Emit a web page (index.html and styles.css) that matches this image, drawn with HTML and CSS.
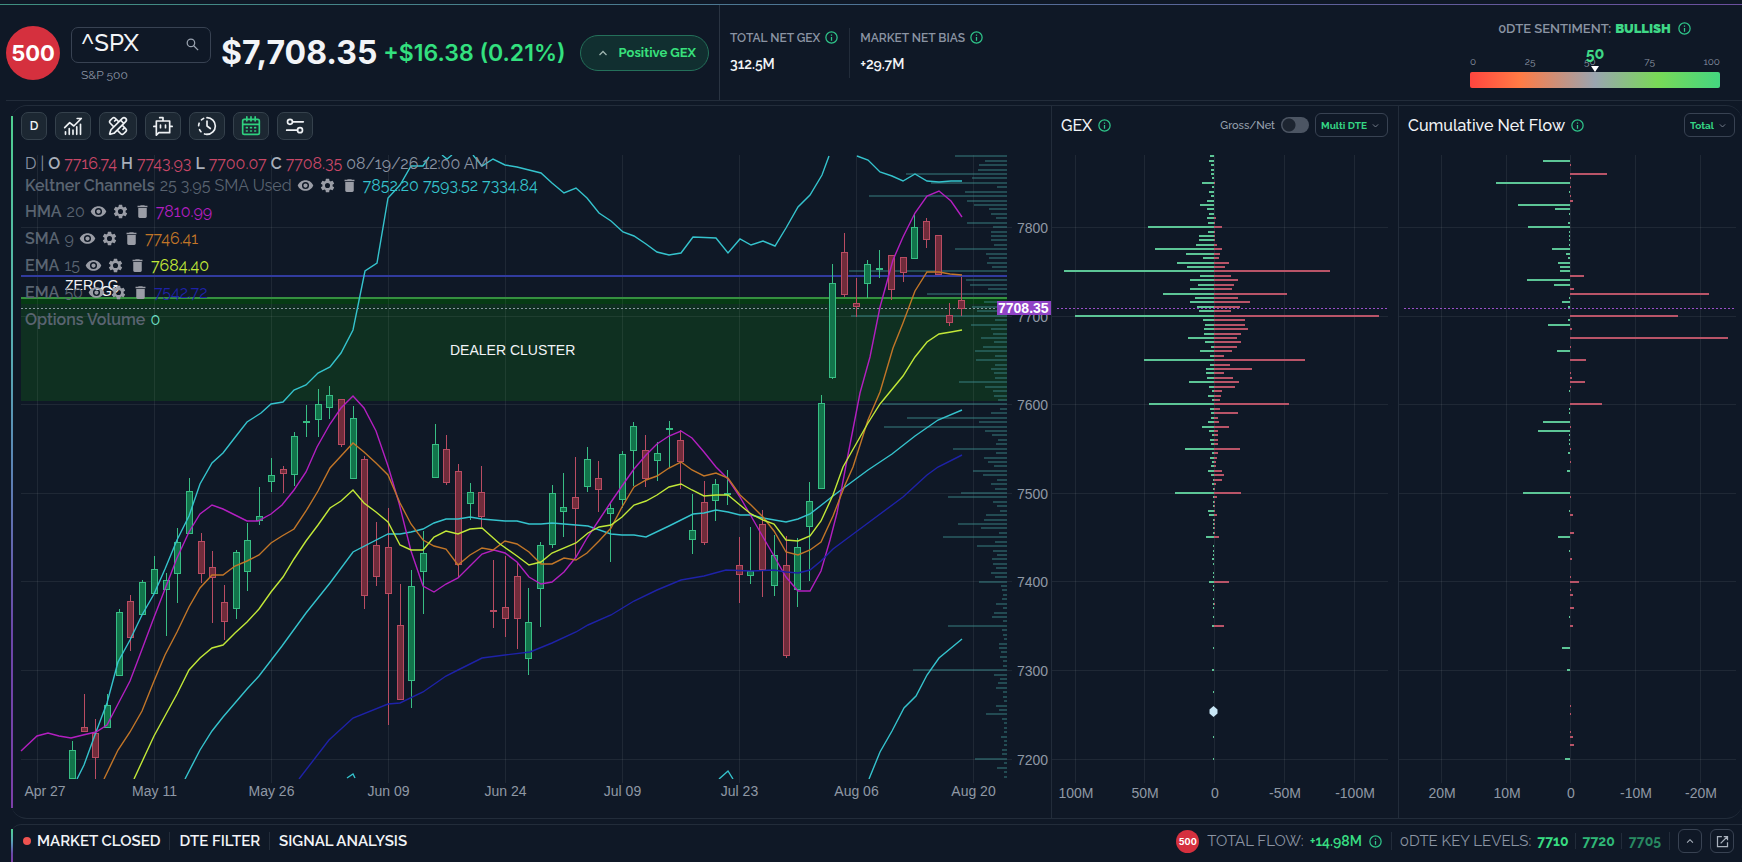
FILE: index.html
```html
<!DOCTYPE html>
<html lang="en">
<head>
    <meta charset="UTF-8">
    <meta name="viewport" content="width=device-width, initial-scale=1.0">
    <title>^SPX - GEX Dashboard</title>
    <link rel="stylesheet" href="styles.css">
</head>
<body>
    <!-- Shared icons -->
    <svg class="sprite" aria-hidden="true">
        <symbol id="i-info" viewBox="0 0 24 24"><path fill="currentColor" d="M11 7h2v2h-2zm0 4h2v6h-2zm1-9a10 10 0 1 0 0 20 10 10 0 0 0 0-20zm0 18a8 8 0 1 1 0-16 8 8 0 0 1 0 16z"/></symbol>
        <symbol id="i-eye" viewBox="0 0 24 24"><path fill="currentColor" d="M12 4.5C7 4.500 2.730 7.610 1 12c1.730 4.390 6 7.500 11 7.500s9.270-3.110 11-7.500c-1.730-4.390-6-7.500-11-7.500zM12 17a5 5 0 1 1 0-10 5 5 0 0 1 0 10zm0-8a3 3 0 1 0 0 6 3 3 0 0 0 0-6z"/></symbol>
        <symbol id="i-gear" viewBox="0 0 24 24"><path fill="currentColor" d="M19.140 12.940c.04-.3.060-.61.060-.94s-.02-.64-.07-.94l2.030-1.580a.5.5 0 0 0 .12-.61l-1.920-3.320a.49.49 0 0 0-.59-.22l-2.390.96a7 7 0 0 0-1.620-.94l-.36-2.540A.48.48 0 0 0 13.920 2.400h-3.840a.47.47 0 0 0-.47.410l-.36 2.540c-.59.240-1.130.570-1.620.940l-2.390-.96a.48.48 0 0 0-.59.220L2.740 8.870a.47.47 0 0 0 .12.610l2.030 1.580a6 6 0 0 0 0 1.880l-2.030 1.580a.5.5 0 0 0-.12.610l1.920 3.320c.12.220.370.290.590.220l2.390-.96c.5.380 1.030.7 1.620.940l.36 2.540c.05.240.240.410.480.410h3.840c.24 0 .44-.17.470-.41l.36-2.540a7 7 0 0 0 1.620-.94l2.390.96c.22.080.470 0 .59-.22l1.920-3.320a.47.47 0 0 0-.12-.61zM12 15.600a3.600 3.600 0 1 1 0-7.200 3.600 3.600 0 0 1 0 7.200z"/></symbol>
        <symbol id="i-trash" viewBox="0 0 24 24"><path fill="currentColor" d="M6 19c0 1.100.9 2 2 2h8c1.100 0 2-.9 2-2V7H6zM19 4h-3.500l-1-1h-5l-1 1H5v2h14z"/></symbol>
        <symbol id="i-down" viewBox="0 0 24 24"><path fill="none" stroke="currentColor" stroke-width="2.500" d="M5 9l7 7 7-7"/></symbol>
        <symbol id="i-up" viewBox="0 0 24 24"><path fill="none" stroke="currentColor" stroke-width="2.500" d="M5 16l7-7 7 7"/></symbol>
    </svg>

    <header class="topbar">
        <div class="quote">
            <span class="logo">500</span>
            <div class="symbol">
                <div class="symbol-box">
                    <input type="text" id="symbol" value="^SPX" aria-label="Symbol">
                    <svg class="search" viewBox="0 0 24 24"><path fill="none" stroke="currentColor" stroke-width="2" d="M9.500 3.500a6 6 0 1 0 0 12 6 6 0 0 0 0-12zM14 14l7 7"/></svg>
                </div>
                <label for="symbol">S&amp;P 500</label>
            </div>
            <span class="price">$7,708.35</span>
            <span class="change">+$16.38 (0.21%)</span>
            <button class="pill"><svg><use href="#i-up"/></svg>Positive GEX</button>
        </div>
        <div class="stats">
            <div class="stat">
                <div class="stat-name">TOTAL NET GEX <svg class="info"><use href="#i-info"/></svg></div>
                <div class="stat-value">312.5M</div>
            </div>
            <div class="stat">
                <div class="stat-name">MARKET NET BIAS <svg class="info"><use href="#i-info"/></svg></div>
                <div class="stat-value">+29.7M</div>
            </div>
        </div>
        <div class="sentiment">
            <div class="sentiment-name">0DTE SENTIMENT: <b>BULLISH</b> <svg class="info"><use href="#i-info"/></svg></div>
            <div class="gauge">
                <div class="ticks"><span>0</span><span>25</span><span>50</span><span>75</span><span>100</span></div>
                <div class="gauge-bar"></div>
                <div class="marker">50</div>
            </div>
        </div>
    </header>

    <main class="panel">
        <section class="col">
            <div class="col-head toolbar">
                <button class="tool small">D</button>
                <button class="tool" aria-label="Indicators"><svg viewBox="0 0 24 24"><path d="M2 14l6-6 5 4 9-9M17 3h5M3 22v-3M7.500 22v-7M12 22v-5M16.500 22v-9M21 22V10"/></svg></button>
                <button class="tool wide" aria-label="Drawing tools"><svg viewBox="0 0 24 24"><path d="M13 7L8.700 2.700a2.410 2.410 0 0 0-3.400 0L2.700 5.300a2.410 2.410 0 0 0 0 3.400L7 13M8 6l2-2M18 16l2-2M17 11l4.300 4.300a2.410 2.410 0 0 1 0 3.400l-2.600 2.600a2.410 2.410 0 0 1-3.400 0L11 17M21.170 6.810a1 1 0 0 0-3.980-3.990L3.840 16.170a2 2 0 0 0-.5.830l-1.320 4.350a.5.5 0 0 0 .62.620l4.350-1.320a2 2 0 0 0 .83-.5zM15 5l4 4"/></svg></button>
                <button class="tool" aria-label="Assistant"><svg viewBox="0 0 24 24"><path d="M12 6V2H8M4 6h16v14H7l-3 3zM1 12.500h3M20 12.500h3M9 11v3M15 11v3"/></svg></button>
                <button class="tool" aria-label="Replay"><svg viewBox="0 0 24 24"><path d="M12 2a10 10 0 0 1 0 20M12 6v6l4 3"/><path stroke-dasharray="3 5" d="M12 22a10 10 0 0 1 0-20"/></svg></button>
                <button class="tool on" aria-label="Calendar"><svg viewBox="0 0 24 24"><path d="M4 4h16a2 2 0 0 1 2 2v14a2 2 0 0 1-2 2H4a2 2 0 0 1-2-2V6c0-1 1-2 2-2zM2 10h20M7 1v5M12 1v5M17 1v5M6.500 14h1M11.500 14h1M16.500 14h1M6.500 18h1M11.500 18h1M16.500 18h1"/></svg></button>
                <button class="tool" aria-label="Settings"><svg viewBox="0 0 24 24"><circle cx="6" cy="7" r="3"/><circle cx="18" cy="17" r="3"/><path d="M9 7h13M15 17H2"/></svg></button>
            </div>
            <div class="chart-wrap">
                <svg class="chart" id="priceChart" viewBox="13 146 1038 672"></svg>
                <div class="legend">
                    <p class="ohlc">D | <b>O</b> <i>7716.74</i> <b>H</b> <i>7743.93</i> <b>L</b> <i>7700.07</i> <b>C</b> <i>7708.35</i> 08/19/26 12:00 AM</p>
                    <p><b>Keltner Channels</b> 25 3.95 SMA Used <svg><use href="#i-eye"/></svg><svg><use href="#i-gear"/></svg><svg><use href="#i-trash"/></svg><span class="cyan">7852.20 7593.52 7334.84</span></p>
                    <p><b>HMA</b> 20 <svg><use href="#i-eye"/></svg><svg><use href="#i-gear"/></svg><svg><use href="#i-trash"/></svg><span class="magenta">7810.99</span></p>
                    <p><b>SMA</b> 9 <svg><use href="#i-eye"/></svg><svg><use href="#i-gear"/></svg><svg><use href="#i-trash"/></svg><span class="orange">7746.41</span></p>
                    <p><b>EMA</b> 15 <svg><use href="#i-eye"/></svg><svg><use href="#i-gear"/></svg><svg><use href="#i-trash"/></svg><span class="yellow">7684.40</span></p>
                    <p><b>EMA</b> 50 <svg><use href="#i-eye"/></svg><svg><use href="#i-gear"/></svg><svg><use href="#i-trash"/></svg><span class="blue">7542.72</span></p>
                    <p><b>Options Volume</b> <span class="teal">0</span></p>
                </div>
            </div>
        </section>

        <section class="col">
            <div class="col-head">
                <h2>GEX</h2>
                <svg class="info"><use href="#i-info"/></svg>
                <label class="switch">Gross/Net <input type="checkbox"></label>
                <div class="select">
                    <select aria-label="Expiration"><option>Multi DTE</option></select>
                    <svg><use href="#i-down"/></svg>
                </div>
            </div>
            <svg class="chart" id="gexChart" viewBox="1052 146 346 672"></svg>
        </section>

        <section class="col">
            <div class="col-head">
                <h2>Cumulative Net Flow</h2>
                <svg class="info"><use href="#i-info"/></svg>
                <div class="select end">
                    <select aria-label="Flow type"><option>Total</option></select>
                    <svg><use href="#i-down"/></svg>
                </div>
            </div>
            <svg class="chart" id="flowChart" viewBox="1399 146 343 672"></svg>
        </section>
    </main>

    <footer class="bottombar">
        <nav>
            <a href="#" class="status">MARKET CLOSED</a>
            <a href="#">DTE FILTER</a>
            <a href="#">SIGNAL ANALYSIS</a>
        </nav>
        <div class="flow">
            <span class="logo mini">500</span>
            <span>TOTAL FLOW:</span>
            <b>+14.98M</b>
            <svg class="info"><use href="#i-info"/></svg>
        </div>
        <div class="levels">
            <span>0DTE KEY LEVELS:</span>
            <b>7710</b><b class="mid">7720</b><b class="low">7705</b>
        </div>
        <div class="actions">
            <button aria-label="Expand"><svg><use href="#i-up"/></svg></button>
            <button aria-label="Open in new window"><svg viewBox="0 0 24 24"><path fill="none" stroke="currentColor" stroke-width="2" d="M11 4H4v16h16v-7M14 4h6v6M20 4L9 15"/></svg></button>
        </div>
    </footer>

    <script src="charts.js"></script>
</body>
</html>
```

FILE: styles.css
```css
* {
    box-sizing: border-box;
}
body {
    margin: 0;
    min-height: 100vh;
    display: flex;
    flex-direction: column;
    background-color: #0f1826;
    color: #f2f4f7;
    font-family: Raleway, Lato, "Open Sans", sans-serif;
    font-size: 14px;
}
button, input, select {
    font-family: inherit;
    color: inherit;
}
button {
    padding: 0;
    cursor: pointer;
}
.sprite {
    position: absolute;
    width: 0;
    height: 0;
}
.info {
    width: 15px;
    height: 15px;
    color: #2fc58a;
    flex: none;
}

/* Top bar */
.topbar {
    height: 101px;
    margin-left: 6px;
    padding-top: 5px;
    display: flex;
    border-bottom: 1px solid #222c3a;
    position: relative;
}
.topbar::before {
    content: "";
    position: absolute;
    top: 4px;
    left: -6px;
    right: 0;
    height: 1px;
    background: linear-gradient(90deg, #3f8f80, #4f7396 50%, #6b4f9e);
}
.quote {
    display: flex;
    align-items: center;
    border-right: 1px solid #2a3442;
    padding-right: 10px;
}
.logo {
    width: 54px;
    height: 54px;
    border-radius: 50%;
    background-color: #d5303e;
    color: #fff;
    font-family: Inter, sans-serif;
    font-weight: 700;
    font-size: 22px;
    display: flex;
    align-items: center;
    justify-content: center;
    flex: none;
}
.symbol {
    width: 140px;
    margin-left: 11px;
    padding-top: 4px;
}
.symbol-box {
    height: 36px;
    display: flex;
    align-items: center;
    border: 1px solid #384252;
    border-radius: 7px;
    padding: 0 10px 0 9px;
}
.symbol-box input {
    flex: 1;
    min-width: 0;
    border: none;
    padding: 0 0 4px;
    background: none;
    font-size: 24px;
    font-weight: 500;
    outline: none;
}
.search {
    width: 15px;
    height: 15px;
    color: #9aa3b0;
}
.symbol label {
    display: block;
    margin: 4px 0 0 10px;
    font-size: 12px;
    line-height: 16px;
    color: #8b94a3;
}
.price {
    margin-left: 10px;
    font-family: Inter, sans-serif;
    font-weight: 700;
    font-size: 32px;
}
.change {
    margin-left: 6px;
    font-family: Inter, sans-serif;
    font-weight: 600;
    font-size: 23px;
    color: #33e07f;
}
.pill {
    margin-left: 14px;
    height: 36px;
    padding: 0 12px 0 16px;
    display: flex;
    align-items: center;
    gap: 10px;
    border: 1px solid #24705a;
    border-radius: 18px;
    background-color: #112f30;
    color: #38e07c;
    font-size: 13px;
    font-weight: 700;
}
.pill svg {
    width: 12px;
    height: 12px;
    color: #9fb5b0;
}
.stats {
    display: flex;
    align-items: center;
    padding-left: 10px;
}
.stat {
    height: 50px;
    padding: 2px 10px 0 0;
}
.stat + .stat {
    border-left: 1px solid #222c3a;
    padding-left: 10px;
}
.stat-name {
    display: flex;
    align-items: center;
    gap: 4px;
    height: 16px;
    font-size: 12px;
    font-weight: 600;
    color: #8b94a3;
}
.stat-value {
    margin-top: 9px;
    font-size: 14px;
    line-height: 18px;
    font-weight: 600;
}
.sentiment {
    width: 250px;
    margin: 14px 22px 0 auto;
}
.sentiment-name {
    display: flex;
    align-items: center;
    justify-content: center;
    gap: 4px;
    height: 18px;
    font-size: 13px;
    font-weight: 600;
    color: #8b94a3;
}
.sentiment-name b {
    color: #3fd887;
}
.sentiment-name .info {
    margin-left: 2px;
}
.gauge {
    position: relative;
    margin-top: 19px;
}
.ticks {
    display: flex;
    justify-content: space-between;
    font-size: 10px;
    line-height: 12px;
    color: #8b94a3;
}
.gauge-bar {
    height: 16px;
    margin-top: 4px;
    border-radius: 2px;
    background: linear-gradient(90deg, #ff453f, #ff7b45 20%, #9aa5b0 50%, #79d957 75%, #44d680);
}
.marker {
    position: absolute;
    top: -14px;
    left: 0;
    right: 0;
    text-align: center;
    font-size: 16px;
    line-height: 24px;
    font-weight: 700;
    color: #3fd887;
}
.marker::after {
    content: "";
    display: block;
    width: 0;
    margin: 0 auto;
    border: 4px solid transparent;
    border-top: 6px solid #fff;
    border-bottom: none;
}

/* Main panel */
.panel {
    position: relative;
    margin: 4px 0 0 11px;
    padding-left: 2px;
    display: grid;
    grid-template-columns: 1038fr 347fr 344fr;
    border-top: 1px solid #222c3a;
    border-bottom: 1px solid #222c3a;
    border-radius: 16px;
}
.panel::before,
.bottombar::before {
    content: "";
    position: absolute;
    left: 0;
    top: 10px;
    bottom: 10px;
    width: 2px;
    background: linear-gradient(#4fcf90, #58a9b4 35%, #5b86b5 50%, #6b46a8 75%, #7c3fa8);
}
.col + .col {
    border-left: 1px solid #222c3a;
}
.col-head {
    height: 40px;
    padding: 0 10px 2px 9px;
    display: flex;
    align-items: center;
}
.col:last-child .col-head {
    padding-right: 7px;
}
.col-head h2 {
    margin: 0 5px 0 0;
    font-size: 16px;
    font-weight: 500;
}
.toolbar {
    gap: 8px;
    padding: 0 0 0 8px;
}
.tool {
    width: 36px;
    height: 28px;
    display: flex;
    align-items: center;
    justify-content: center;
    border: 1px solid #35414c;
    border-radius: 7px;
    background-color: #1c2732;
    font-size: 12px;
    font-weight: 600;
}
.tool.small {
    width: 26px;
}
.tool.wide {
    width: 38px;
}
.tool svg {
    width: 20px;
    height: 20px;
    fill: none;
    stroke: #eef1f4;
    stroke-width: 2;
    stroke-linejoin: round;
    stroke-linecap: round;
}
.tool.on svg {
    stroke: #2fd07f;
}
.switch {
    margin-left: auto;
    display: flex;
    align-items: center;
    gap: 6px;
    font-size: 11px;
    font-weight: 500;
    color: #9aa3b0;
}
.switch input {
    appearance: none;
    margin: 0;
    width: 28px;
    height: 16px;
    border-radius: 8px;
    background: radial-gradient(circle at 8px 8px, #1d2531 6px, #4c5563 7px);
}
.select {
    position: relative;
    margin-left: 6px;
    display: flex;
    align-items: center;
}
.select.end {
    margin-left: auto;
}
.select select {
    appearance: none;
    height: 24px;
    padding: 0 20px 0 5px;
    border: 1px solid #384252;
    border-radius: 6px;
    background: none;
    color: #35d685;
    font-size: 10px;
    font-weight: 700;
}
.select svg {
    position: absolute;
    right: 8px;
    width: 9px;
    height: 9px;
    color: #77818f;
    pointer-events: none;
}
.chart {
    display: block;
    width: 100%;
    height: auto;
}
.chart-wrap {
    position: relative;
}

/* Legend over the price chart */
.legend {
    position: absolute;
    left: 12px;
    top: 5px;
    color: #5a6471;
    font-size: 16px;
}
.legend p {
    display: flex;
    align-items: center;
    gap: 5px;
    margin: 0;
    height: 27px;
    white-space: nowrap;
}
.legend p:nth-child(2) {
    height: 20px;
    margin-bottom: 3px;
}
.legend .ohlc {
    height: 24px;
    color: #8b94a3;
    gap: 4px;
}
.legend b {
    font-weight: 600;
}
.ohlc b {
    color: #a9afba;
}
.ohlc i {
    font-style: normal;
    color: #c84766;
}
.legend svg {
    width: 17px;
    height: 17px;
    color: #9a9da6;
}
.cyan { color: #35c3cd; }
.magenta { color: #b31fc0; }
.orange { color: #c27628; }
.yellow { color: #c2e838; }
.blue { color: #1e22a8; }
.teal { color: #6fe0c6; }

/* Drawing inside the charts */
.chart text {
    font-family: "Liberation Sans", Arial, sans-serif;
    font-size: 14px;
    fill: #8f98a5;
}
.chart .x-label { text-anchor: middle; }
.chart .note { fill: #f2f4f7; }
.chart .tag-text { fill: #fff; font-weight: bold; }
.tag { fill: #9043c6; }
.grid { stroke: #fff; stroke-opacity: 0.07; }
.band { fill: #0f3021; }
.band-edge { fill: #063b14; }
.green-line { stroke: #35913f; stroke-width: 2; }
.blue-line { stroke: #313b9e; stroke-width: 2; }
.now { stroke: #8a9aa0; stroke-dasharray: 2 2; }
.now-side { stroke: #9a4fc8; stroke-dasharray: 2 2; }
.volume { fill: #3b8a8c; fill-opacity: 0.45; }
.pos { fill: #5cc596; }
.neg { fill: #b95468; }
.candle-up { fill: #12744b; stroke: #38bd84; }
.candle-down { fill: #712c3b; stroke: #b94c62; }
.line { fill: none; stroke-width: 1.4; stroke: currentColor; }

/* Bottom bar */
.bottombar {
    position: relative;
    flex: 1;
    min-height: 36px;
    margin: 5px 0 0 11px;
    padding: 0 8px 5px 12px;
    display: flex;
    align-items: center;
    border-top: 1px solid #222c3a;
    border-top-left-radius: 10px;
}
.bottombar::before {
    top: 4px;
    bottom: 0;
}
nav {
    display: flex;
    align-items: center;
    margin-right: auto;
}
nav a {
    color: #f2f4f7;
    text-decoration: none;
    font-size: 15px;
    font-weight: 600;
    padding: 0 9px;
}
nav a + a {
    border-left: 1px solid #222c3a;
}
nav .status {
    padding-left: 0;
}
.status::before {
    content: "";
    display: inline-block;
    width: 8px;
    height: 8px;
    margin: 0 6px 1px 0;
    border-radius: 50%;
    background-color: #ef5350;
}
.logo.mini {
    width: 23px;
    height: 23px;
    font-size: 9px;
}
.flow, .levels, .actions {
    display: flex;
    align-items: center;
    gap: 6px;
    color: #8b94a3;
    font-size: 15px;
}
.flow b, .levels b {
    color: #38dd82;
    font-size: 14px;
}
.flow {
    padding-right: 8px;
}
.flow b {
    font-weight: 600;
}
.flow .mini {
    margin-right: 2px;
}
.levels {
    border-left: 1px solid #222c3a;
    border-right: 1px solid #222c3a;
    padding: 0 8px;
}
.levels b + b {
    border-left: 1px solid #222c3a;
    padding-left: 7px;
}
.levels .mid { color: #2fb878; }
.levels .low { color: #288a62; }
.actions {
    padding-left: 8px;
    gap: 8px;
}
.actions button {
    width: 24px;
    height: 24px;
    display: flex;
    align-items: center;
    justify-content: center;
    border: 1px solid #384252;
    border-radius: 6px;
    background: none;
    color: #aab2bd;
}
.actions svg {
    width: 15px;
    height: 15px;
}
.actions button:first-child svg {
    width: 10px;
    height: 10px;
}
```

FILE: charts.js
```js
const NS = 'http://www.w3.org/2000/svg';
const TOP = 155;
const BOTTOM = 779;
const STRIKE_STEP = 4.43;
const FIRST_STRIKE_Y = 156.3;
const PRICE_Y = 308.5;

function add(parent, tag, attrs, text) {
    const el = document.createElementNS(NS, tag);
    for (const key in attrs) el.setAttribute(key, attrs[key]);
    if (text !== undefined) el.textContent = text;
    parent.appendChild(el);
    return el;
}

function line(svg, cls, x1, y1, x2, y2) {
    add(svg, 'line', { class: cls, x1, y1, x2, y2 });
}

function strikeY(k) {
    return Math.round(FIRST_STRIKE_Y + k * STRIKE_STEP) - 1;
}

const priceLevels = [7800, 7700, 7600, 7500, 7400, 7300, 7200];
const levelY = i => Math.round(227 + i * 88.6) + 0.5;

// up/down, wick top, body top, body bottom, wick bottom; first bar is number 3
const candles = [
    [1, 741, 750, 779, 779], [0, 694, 727, 732, 732], [0, 719, 733, 758, 779], [1, 694, 705, 728, 728],
    [1, 609, 612, 676, 676], [0, 595, 601, 638, 651], [1, 580, 582, 615, 615], [1, 556, 569, 594, 594],
    [1, 573, 580, 590, 636], [1, 528, 542, 574, 603], [1, 478, 491, 534, 534], [0, 533, 541, 574, 583],
    [0, 551, 567, 578, 623], [0, 585, 602, 622, 640], [1, 550, 552, 609, 619], [1, 523, 540, 572, 591],
    [1, 487, 516, 521, 525], [1, 458, 475, 482, 492], [0, 466, 469, 474, 493], [1, 432, 436, 475, 486],
    [1, 405, 421, 422, 437], [1, 389, 404, 420, 437], [1, 386, 395, 408, 419], [0, 399, 399, 445, 447],
    [1, 406, 418, 479, 479], [0, 456, 459, 596, 609], [0, 522, 545, 577, 586], [0, 508, 547, 594, 725],
    [0, 584, 625, 700, 700], [1, 570, 586, 681, 708], [1, 531, 553, 572, 614], [1, 424, 444, 478, 478],
    [0, 435, 449, 483, 485], [0, 464, 471, 565, 578], [1, 483, 492, 504, 520], [0, 466, 492, 517, 527],
    [0, 560, 610, 611, 628], [0, 556, 607, 619, 637], [0, 563, 576, 619, 649], [1, 588, 622, 659, 675],
    [1, 542, 545, 589, 627], [1, 485, 493, 545, 548], [1, 473, 507, 512, 537], [0, 457, 497, 509, 558],
    [1, 447, 459, 487, 492], [0, 461, 478, 490, 512], [1, 503, 508, 514, 562], [1, 451, 454, 500, 508],
    [1, 422, 426, 451, 486], [0, 435, 450, 479, 487], [1, 442, 453, 461, 481], [1, 421, 428, 429, 468],
    [0, 430, 440, 462, 489], [1, 494, 530, 540, 554], [0, 481, 502, 543, 545], [1, 479, 484, 501, 521],
    [1, 470, 493, 495, 505], [0, 537, 565, 575, 603], [1, 527, 571, 576, 584], [0, 510, 524, 570, 597],
    [1, 535, 555, 586, 596], [0, 536, 565, 656, 658], [1, 538, 547, 590, 607], [1, 482, 501, 527, 581],
    [1, 395, 403, 489, 489], [1, 264, 283, 378, 379], [0, 233, 252, 295, 297], [0, 278, 303, 307, 317],
    [1, 260, 264, 284, 298], [1, 250, 268, 269, 278], [0, 255, 255, 290, 300], [0, 257, 257, 273, 282],
    [1, 213, 227, 259, 259], [0, 218, 221, 240, 248], [0, 235, 235, 275, 275], [0, 303, 315, 323, 326],
    [0, 277, 300, 309, 316]
];

const studies = [
    // Keltner upper
    ['cyan', '77,779 84,765 96,732 107,703 118,662 130,640 142,615 154,594 165,569 177,540 189,516 200,484 212,463 223,453 233,440 247,422 261,413 271,404 283,402 294,390 306,385 318,373 330,367 341,353 353,330 365,271 377,263 388,198 400,185 411,166 423,166 429,157'],
    ['cyan', '442,155 447,159 452,155'],
    ['cyan', '473,155 482,166 493,159 505,165 517,167 529,170 541,173 552,183 564,193 576,188 587,198 599,213 611,221 623,232 634,236 646,244 657,252 669,255 681,253 693,237 716,238 728,253 740,239 751,245 763,241 775,246 786,228 798,207 810,195 822,175 829,156'],
    ['cyan', '857,156 868,160 880,172 892,176 903,181 915,174 927,181 939,182 951,181 962,181'],
    // Keltner middle
    ['cyan', '185,779 200,750 212,731 223,717 247,689 259,676 282,646 306,613 330,583 353,552 388,534 400,534 411,532 423,529 434,523 446,519 458,519 470,517 482,519 505,521 517,521 529,524 541,524 552,523 588,526 611,534 622,535 634,535 646,537 669,526 693,514 704,513 716,510 728,512 740,515 751,515 763,518 786,522 798,519 810,514 833,496 845,487 868,470 892,454 915,436 938,420 962,410'],
    // Keltner lower
    ['cyan', '347,778 353,774 355,778'],
    ['cyan', '719,779 728,771 733,779'],
    ['cyan', '869,779 880,752 892,731 904,708 916,696 927,675 939,658 962,639'],
    // HMA 20
    ['magenta', '21,751 37,736 48,733 59,736 71,738 83,735 96,732 107,725 118,704 130,681 141,652 153,620 165,589 177,558 189,532 200,514 212,505 223,509 235,515 247,521 258,521 271,514 282,505 294,490 306,472 317,447 330,424 341,408 353,396 364,408 376,431 388,466 399,503 411,551 423,586 434,592 446,584 458,578 470,566 482,554 494,550 505,553 517,562 529,577 541,584 552,582 564,572 576,557 587,538 599,520 611,502 622,486 634,469 646,455 657,444 669,436 681,431 692,438 704,452 716,467 728,479 740,497 751,516 763,537 774,556 786,577 798,591 810,591 821,571 830,540 837,513 847,460 860,393 870,357 880,307 893,260 903,237 915,213 927,196 939,191 951,201 962,217'],
    // SMA 9
    ['orange', '104,779 118,750 130,732 142,711 154,681 165,655 177,632 189,607 200,588 212,575 223,575 235,566 247,561 259,555 271,543 282,536 294,529 306,511 318,491 330,468 341,456 353,443 364,452 376,463 388,475 400,503 411,524 423,540 434,546 446,549 458,565 470,555 482,548 493,550 505,541 517,544 529,552 541,564 552,564 564,558 576,560 587,553 599,541 611,528 622,507 634,487 646,480 657,476 669,468 681,462 692,470 704,476 716,473 728,478 740,495 751,505 763,517 774,531 786,552 798,555 810,550 821,542 833,516 845,485 853,467 868,420 880,392 893,348 903,323 915,291 927,272 939,272 950,274 962,275'],
    // EMA 15
    ['yellow', '134,779 154,736 177,694 189,670 200,658 212,648 223,645 235,633 247,622 259,609 271,592 283,577 294,559 306,541 318,525 330,508 341,501 353,490 364,503 376,512 388,522 400,545 411,550 423,550 434,537 446,531 458,534 470,529 482,528 500,544 517,556 529,565 541,562 552,553 576,543 588,533 599,527 611,525 622,517 634,505 646,501 657,495 669,487 681,484 692,490 704,496 716,495 728,495 740,505 751,514 763,520 774,524 786,540 798,541 810,536 821,521 833,495 843,467 868,423 880,404 903,376 915,357 927,342 939,334 951,332 962,330'],
    // EMA 50
    ['blue', '299,779 329,740 353,718 388,704 400,703 423,692 446,676 458,670 482,658 505,655 530,652 552,643 576,632 588,625 611,615 634,601 657,590 681,580 704,576 726,570 751,571 774,570 786,572 798,573 810,570 821,561 833,549 868,523 903,497 927,475 938,467 962,455']
];

// option volume per strike, 7880 downwards
const volume = [
    52, 22, 28, 29, 101, 35, 76, 10, 42, 138, 40, 33, 18, 16, 11, 40, 14, 16, 16, 16, 13, 52, 21, 18, 20, 15, 158, 0,
    41, 37, 19, 80, 25, 23, 35, 30, 156, 12, 36, 16, 14, 26, 13, 24, 32, 12, 31, 12, 16, 13, 12, 48, 22, 14, 13, 9,
    125, 7, 16, 100, 28, 123, 22, 15, 9, 11, 54, 11, 23, 19, 13, 34, 24, 10, 16, 12, 46, 59, 14, 10, 7, 21, 23, 49,
    26, 8, 64, 12, 30, 14, 10, 15, 14, 11, 16, 12, 28, 6, 5, 4, 5, 11, 4, 13, 15, 4, 59, 5, 4, 3, 8, 8, 6, 7, 4, 4,
    94, 13, 7, 9, 11, 4, 4, 3, 11, 8, 21, 5, 3, 3, 3, 6, 3, 3, 5, 5, 32, 3, 10, 3, 3
];

// [positive, negative] per strike
const gex = [
    [4, 0], [5, 0], [3, 0], [3, 0], [3, 0], [2, 0], [12, 1], [2, 0], [5, 0], [3, 0], [7, 0], [14, 0], [7, 0], [5, 0],
    [7, 2], [6, 1], [66, 8], [6, 1], [15, 1], [15, 1], [18, 3], [59, 8], [28, 6], [11, 5], [37, 15], [27, 11],
    [150, 116], [14, 17], [24, 24], [16, 20], [24, 18], [51, 73], [19, 24], [24, 36], [17, 26], [15, 17], [139, 165],
    [11, 31], [9, 31], [10, 34], [10, 27], [26, 23], [9, 27], [3, 23], [14, 18], [4, 10], [70, 91], [4, 16], [8, 38],
    [8, 10], [7, 19], [25, 25], [5, 21], [2, 8], [6, 7], [2, 6], [65, 75], [4, 6], [3, 24], [3, 4], [6, 5], [12, 15],
    [5, 4], [2, 4], [4, 4], [3, 4], [29, 26], [2, 4], [4, 3], [2, 2], [3, 2], [6, 8], [3, 10], [1, 8], [2, 2], [1, 1],
    [39, 27], [1, 3], [1, 1], [1, 1], [6, 1], [5, 3], [1, 1], [1, 1], [1, 1], [1, 1], [8, 5], [0, 0], [1, 0], [1, 0],
    [1, 0], [2, 0], [1, 0], [0, 0], [1, 0], [1, 0], [5, 15], [1, 0], [1, 0], [0, 0], [1, 0], [1, 1], [1, 0], [0, 0],
    [1, 0], [0, 0], [2, 10], [0, 0], [0, 0], [0, 0], [0, 0], [1, 0], [0, 0], [0, 0], [0, 0], [0, 0], [2, 0], [0, 0],
    [0, 0], [0, 0], [0, 0], [1, 0], [0, 0], [0, 0], [0, 0], [0, 0], [0, 0], [0, 0], [0, 0], [0, 0], [0, 0], [1, 0],
    [0, 0], [0, 0], [0, 0], [0, 0], [1, 0]
];

// strike number: net flow, positive is drawn to the left
const flow = {
    1: 27, 2: -1, 4: -37, 5: -1, 6: 74, 7: -1, 8: 1, 9: -1, 10: -3, 11: 52, 12: 15, 13: 1, 15: 2, 16: 42, 17: 1,
    18: 1, 19: 1, 20: 1, 21: 18, 22: 4, 23: 2, 24: 12, 25: 10, 26: 10, 27: -14, 28: 43, 29: 16, 30: -4, 31: -139,
    32: 1, 33: 8, 34: 2, 36: -108, 37: 2, 38: 22, 39: -2, 41: -158, 43: -1, 44: 13, 46: -16, 49: -1, 50: -2,
    51: -15, 52: -1, 53: 1, 56: -32, 57: 1, 58: 1, 60: 27, 61: -1, 62: 32, 63: 1, 64: 1, 65: 1, 66: -1, 67: 2,
    69: -1, 71: 3, 76: 47, 77: -1, 80: 1, 81: -3, 85: -4, 86: 12, 89: 1, 91: -2, 95: -1, 96: -9, 98: -1, 99: -3,
    102: -4, 104: 1, 106: -3, 111: 8, 116: 3, 124: -1, 126: -1, 130: -1, 131: -3, 133: -4, 136: 5
};

function drawPriceChart() {
    const svg = document.getElementById('priceChart');
    const right = 1007;
    const clip = add(svg, 'clipPath', { id: 'plot' });
    add(clip, 'rect', { x: 19, y: TOP, width: right - 19, height: BOTTOM - TOP });

    add(svg, 'rect', { class: 'band', x: 21, y: 298, width: right - 21, height: 103 });
    add(svg, 'rect', { class: 'band-edge', x: 21, y: 298, width: right - 21, height: 6 });

    priceLevels.forEach((p, i) => {
        line(svg, 'grid', 21, levelY(i), 1012, levelY(i));
        add(svg, 'text', { x: 1017, y: levelY(i) + 5 }, p);
    });
    ['Apr 27', 'May 11', 'May 26', 'Jun 09', 'Jun 24', 'Jul 09', 'Jul 23', 'Aug 06', 'Aug 20'].forEach((d, i) => {
        const x = Math.floor(37 + i * 117.1) + 0.5;
        line(svg, 'grid', x, TOP, x, 783);
        add(svg, 'text', { class: 'x-label', x: i === 0 ? 45 : x, y: 796 }, d);
    });

    volume.forEach((v, k) => {
        add(svg, 'rect', { class: 'volume', x: right - v, y: strikeY(k), width: v, height: 2 });
    });
    line(svg, 'blue-line', 21, 276, right, 276);
    line(svg, 'green-line', 21, 298, right, 298);
    line(svg, 'now', 21, PRICE_Y, right, PRICE_Y);

    const plot = add(svg, 'g', { 'clip-path': 'url(#plot)' });
    candles.forEach((c, i) => {
        const x = Math.round(36.8 + (i + 3) * 11.7) + 0.5;
        const cls = c[0] ? 'candle-up' : 'candle-down';
        line(plot, cls, x, c[1], x, c[2]);
        line(plot, cls, x, c[3], x, c[4]);
        add(plot, 'rect', { class: cls, x: x - 3, y: c[2] + 0.5, width: 6, height: Math.max(c[3] - c[2] - 1, 1) });
    });
    studies.forEach(s => add(plot, 'polyline', { class: 'line ' + s[0], points: s[1] }));

    add(svg, 'text', { class: 'note', x: 65, y: 290 }, 'ZERO G');
    add(svg, 'text', { class: 'note', x: 101, y: 296 }, 'G2');
    add(svg, 'text', { class: 'note', x: 450, y: 355 }, 'DEALER CLUSTER');
    add(svg, 'rect', { class: 'tag', x: 997, y: 301, width: 54, height: 14 });
    add(svg, 'text', { class: 'tag-text', x: 998, y: 313 }, '7708.35');
}

function drawSideChart(id, left, right, zero, ticks, bars) {
    const svg = document.getElementById(id);
    priceLevels.forEach((p, i) => line(svg, 'grid', left, levelY(i), right, levelY(i)));
    ticks.forEach(t => {
        line(svg, 'grid', t[0] + 0.5, TOP, t[0] + 0.5, 783);
        add(svg, 'text', { class: 'x-label', x: t[0] + 1, y: 798 }, t[1]);
    });
    bars.forEach(b => {
        const y = strikeY(b[0]);
        if (b[1]) add(svg, 'rect', { class: 'pos', x: zero - b[1], y: y, width: b[1], height: 2 });
        if (b[2]) add(svg, 'rect', { class: 'neg', x: zero, y: y, width: b[2], height: 2 });
    });
    line(svg, 'now-side', left + 5, PRICE_Y, right, PRICE_Y);
    return svg;
}

drawPriceChart();

const gexSvg = drawSideChart('gexChart', 1052, 1388, 1214,
    [[1075, '100M'], [1144, '50M'], [1214, '0'], [1284, '-50M'], [1354, '-100M']],
    gex.map((g, k) => [k, g[0], g[1]]));
add(gexSvg, 'path', { d: 'M1213.5 706l4 3.500v4l-4 3.500-4-3.500v-4z', fill: '#c8e6f5' });

drawSideChart('flowChart', 1399, 1736, 1570,
    [[1441, '20M'], [1506, '10M'], [1570, '0'], [1635, '-10M'], [1700, '-20M']],
    Object.keys(flow).map(k => [+k, Math.max(flow[k], 0), Math.max(-flow[k], 0)]));
```
